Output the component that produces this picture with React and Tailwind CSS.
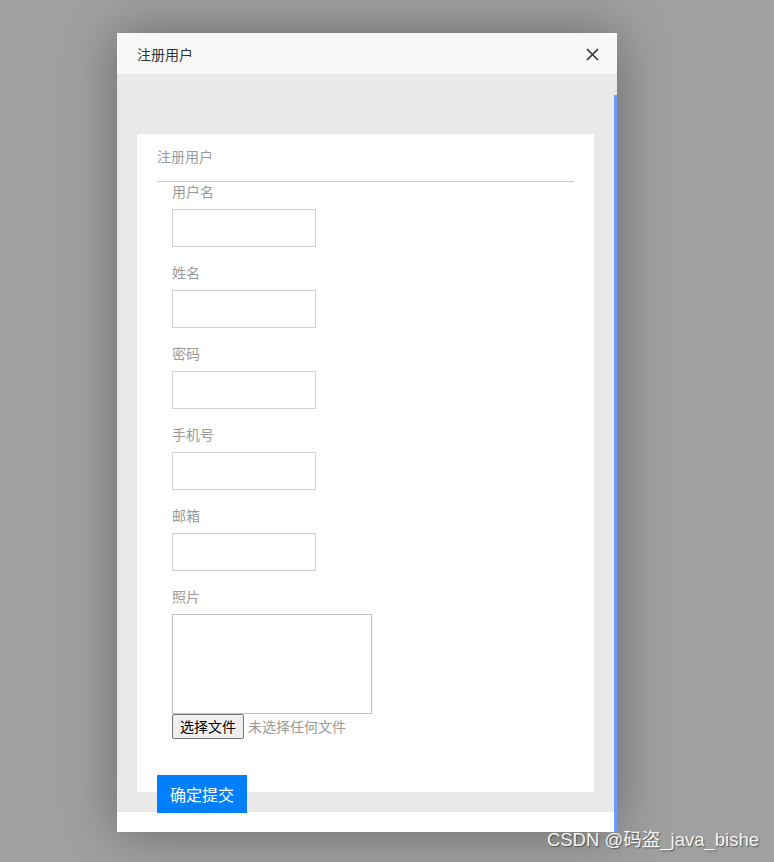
import React from "react";

const font = { fontFamily: '"Noto Sans CJK SC", "Noto Sans", sans-serif' };

function Field({ label }) {
  return (
    <div className="pl-[15px]">
      <div className="h-[20px] leading-[18px] text-[14px] text-[#9a9a9a]">{label}</div>
      <div className="mt-[7px] w-[144px] h-[38px] border border-[#d2d2d2] bg-white" />
      <div className="h-[16px]" />
    </div>
  );
}

export default function App() {
  return (
    <div className="relative w-[774px] h-[862px] bg-[#a0a0a0] overflow-hidden pt-[33px] pl-[117px]" style={font}>
      <div className="w-[500px] h-[799px] bg-white flex flex-col shadow-[0_0_50px_rgba(0,0,0,0.35)]">
        {/* header */}
        <div className="h-[41px] shrink-0 bg-[#f8f8f8] flex items-center justify-between pl-[20px] pr-[18px]">
          <span className="text-[14px] text-[#333] leading-[18px]">注册用户</span>
          <svg width="13" height="13" viewBox="0 0 13 13" className="mt-[1px]">
            <path d="M1 1 L12 12 M12 1 L1 12" stroke="#333" strokeWidth="1.6" />
          </svg>
        </div>
        {/* content */}
        <div className="flex-1 flex">
          <div className="flex-1 flex flex-col">
            <div className="bg-[#e9e9e9] pt-[60px] px-[20px]">
              <div className="bg-white h-[658px] px-[20px]">
                <div className="pt-[12px] pb-[13px] border-b border-[#cccccc]">
                  <div className="h-[22px] leading-[20px] text-[14px] text-[#9a9a9a]">注册用户</div>
                </div>
                <Field label="用户名" />
                <Field label="姓名" />
                <Field label="密码" />
                <Field label="手机号" />
                <Field label="邮箱" />
                <div className="pl-[15px]">
                  <div className="h-[20px] leading-[18px] text-[14px] text-[#9a9a9a]">照片</div>
                  <div className="mt-[7px] w-[200px] h-[100px] border border-[#bdbdbd]" />
                  <div className="flex items-center h-[25px]">
                    <div className="h-[25px] w-[72px] flex items-center justify-center border border-[#767676] rounded-[2px] bg-[#efefef] text-[14px] text-black">
                      选择文件
                    </div>
                    <span className="ml-[4px] text-[14px] text-[#9a9a9a]">未选择任何文件</span>
                  </div>
                </div>
              </div>
              <div className="-mt-[17px] ml-[20px] relative w-[90px] h-[38px] bg-[#0080ff] text-white text-[16px] flex items-center justify-center -mb-[1px]">
                确定提交
              </div>
            </div>
            <div className="flex-1 bg-white" />
          </div>
          <div className="w-[3px] flex flex-col">
            <div className="h-[21px] bg-[#e9e9e9]" />
            <div className="flex-1 bg-[#6e9bff]" />
          </div>
        </div>
      </div>
      <div
        className="absolute right-[15px] bottom-[11px] text-[18.5px] text-[#f4f4f4] leading-[22px]"
        style={{ fontFamily: '"Liberation Sans", "Noto Sans CJK SC", sans-serif', textShadow: "1px 1px 1px rgba(0,0,0,0.45)" }}
      >
        CSDN @码盗_java_bishe
      </div>
    </div>
  );
}
